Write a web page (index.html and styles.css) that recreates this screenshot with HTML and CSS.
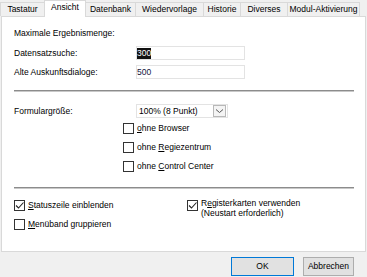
FILE: index.html
```html
<!DOCTYPE html>
<html lang="de">
<head>
    <meta charset="UTF-8">
    <title>Optionen - Ansicht</title>
    <link rel="stylesheet" href="styles.css">
</head>
<body>
    <div class="dialog">
        <div class="tabs">
            <div class="tab tastatur">Tastatur</div>
            <div class="tab active">Ansicht</div>
            <div class="tab datenbank">Datenbank</div>
            <div class="tab wiedervorlage">Wiedervorlage</div>
            <div class="tab historie">Historie</div>
            <div class="tab diverses">Diverses</div>
            <div class="tab module">Modul-Aktivierung</div>
        </div>

        <div class="panel">
            <div class="row heading">Maximale Ergebnismenge:</div>
            <div class="row field first">
                <span class="label">Datensatzsuche:</span>
                <span class="input"><span class="selected">300</span></span>
            </div>
            <div class="row field">
                <span class="label">Alte Auskunftsdialoge:</span>
                <span class="input">500</span>
            </div>

            <div class="separator"></div>

            <div class="row field size">
                <span class="label">Formulargröße:</span>
                <span class="select">
                    <span class="value">100% (8 Punkt)</span>
                    <span class="arrow">
                        <svg width="9" height="6" viewBox="0 0 9 6"><path d="M1 1.5 L4.5 4.5 L8 1.5" fill="none" stroke="#555" stroke-width="1"/></svg>
                    </span>
                </span>
            </div>
            <div class="options">
                <div class="check"><span class="box"></span><span><u>o</u>hne Browser</span></div>
                <div class="check"><span class="box"></span><span>ohne <u>R</u>egiezentrum</span></div>
                <div class="check"><span class="box"></span><span>ohne <u>C</u>ontrol Center</span></div>
            </div>

            <div class="separator lower"></div>

            <div class="columns">
                <div class="column">
                    <div class="check">
                        <span class="box"><svg width="9" height="9" viewBox="0 0 9 9"><path d="M1 4.5 L3.5 7 L8.5 1.5" fill="none" stroke="#222" stroke-width="1.1"/></svg></span>
                        <span><u>S</u>tatuszeile einblenden</span>
                    </div>
                    <div class="check">
                        <span class="box"></span>
                        <span><u>M</u>enüband gruppieren</span>
                    </div>
                </div>
                <div class="column right">
                    <div class="check multi">
                        <span class="box"><svg width="9" height="9" viewBox="0 0 9 9"><path d="M1 4.5 L3.5 7 L8.5 1.5" fill="none" stroke="#222" stroke-width="1.1"/></svg></span>
                        <span>R<u>e</u>gisterkarten verwenden<br>(Neustart erforderlich)</span>
                    </div>
                </div>
            </div>
        </div>

        <div class="buttons">
            <div class="button default">OK</div>
            <div class="button">Abbrechen</div>
        </div>
    </div>
</body>
</html>
```

FILE: styles.css
```css
body {
    margin: 0;
    padding: 0;
    background-color: #f0f0f0;
    font-family: "Liberation Sans", Arial, sans-serif;
    font-size: 8.5px;
    color: #000;
}

.dialog {
    width: 367px;
    height: 277px;
    overflow: hidden;
}

/* tab strip */
.tabs {
    display: flex;
    height: 16px;
    align-items: flex-end;
    position: relative;
    z-index: 1;
}

.tab {
    height: 13px;
    line-height: 13px;
    text-align: center;
    border: 1px solid #d9d9d9;
    border-bottom: none;
    margin-left: -1px;
    background-color: #f0f0f0;
    white-space: nowrap;
}

.tab.tastatur {
    width: 43px;
    margin-left: 0;
}

.tab.active {
    width: 40px;
    height: 16px;
    line-height: 13px;
    margin-bottom: -1px;
    background-color: #fff;
}

.tab.datenbank { width: 49px; }
.tab.wiedervorlage { width: 67px; }
.tab.historie { width: 36px; }
.tab.diverses { width: 46px; }
.tab.module { width: 71px; }

/* white page */
.panel {
    margin-left: 1px;
    width: 351px;
    height: 225px;
    padding: 9px 0 0 12px;
    background-color: #fff;
    border: 1px solid #d9d9d9;
}

.row {
    display: flex;
    align-items: center;
    height: 14px;
    line-height: 14px;
}

.field {
    margin-top: 5px;
}

.field.first {
    margin-top: 6px;
}

.label {
    width: 122px;
}

.input {
    width: 107px;
    height: 12px;
    line-height: 12px;
    border: 1px solid #e3e3e3;
    color: #14143c;
}

.selected {
    display: inline-block;
    background-color: #111;
    color: #fff;
    line-height: 11px;
}

.separator {
    width: 340px;
    height: 1px;
    margin-top: 11px;
    background-color: #8c8c8c;
    border-bottom: 1px solid #c8c8c8;
}

.separator.lower {
    margin-top: 14px;
}

.size {
    margin-top: 12px;
}

.select {
    display: flex;
    align-items: center;
    justify-content: space-between;
    width: 88px;
    height: 12px;
    padding-left: 2px;
    border: 1px solid #e3e3e3;
}

.arrow {
    display: flex;
    align-items: center;
    justify-content: center;
    width: 11px;
    height: 10px;
    margin-right: 1px;
    border: 1px solid #b8b8b8;
    background-color: #f4f4f4;
}

.options {
    display: flex;
    flex-direction: column;
    gap: 6px;
    margin-top: 4px;
    padding-left: 109px;
}

.check {
    display: flex;
    align-items: center;
    gap: 3px;
    height: 13px;
    line-height: 13px;
}

.box {
    display: flex;
    align-items: center;
    justify-content: center;
    width: 9px;
    height: 9px;
    border: 1px solid #333;
    background-color: #fff;
}

.columns {
    display: flex;
    margin-top: 10px;
}

.column {
    display: flex;
    flex-direction: column;
    gap: 6px;
    width: 173px;
}

.check.multi {
    align-items: flex-start;
    height: auto;
    line-height: 9.5px;
}

.check.multi .box {
    margin-top: 1px;
}

u {
    text-decoration-thickness: 1px;
    text-underline-offset: 1px;
}

/* buttons below the page */
.buttons {
    display: flex;
    justify-content: flex-end;
    gap: 9px;
    padding: 5px 13px 0 0;
}

.button {
    width: 61px;
    height: 17px;
    line-height: 17px;
    text-align: center;
    background-color: #e1e1e1;
    border: 1px solid #adadad;
}

.button + .button {
    width: 49px;
}

.button.default {
    border-color: #0078d7;
}
```
